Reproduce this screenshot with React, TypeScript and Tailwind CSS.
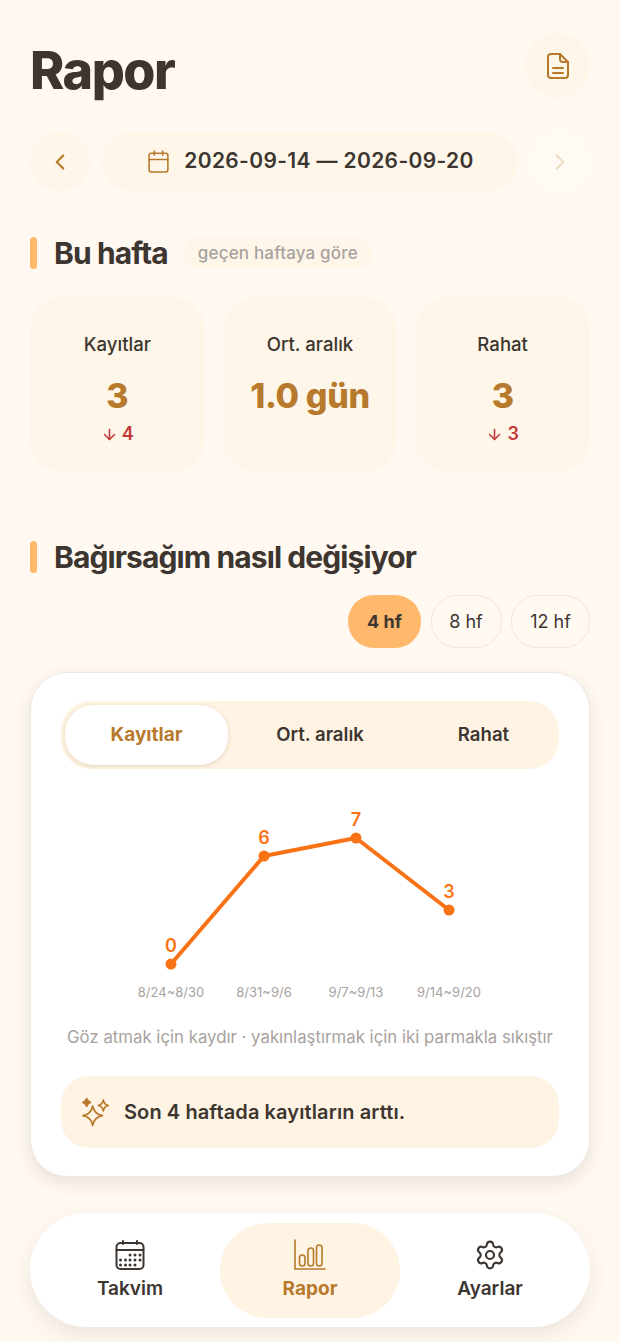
import { ArrowDown, Calendar, ChevronLeft, ChevronRight, Settings } from 'lucide-react';

const stats = [
  { label: 'Kayıtlar', value: '3', delta: '4' },
  { label: 'Ort. aralık', value: '1.0 gün' },
  { label: 'Rahat', value: '3', delta: '3' },
];

const points = [
  { x: 171, y: 964, value: '0', label: '8/24~8/30' },
  { x: 264, y: 856, value: '6', label: '8/31~9/6' },
  { x: 356, y: 838, value: '7', label: '9/7~9/13' },
  { x: 449, y: 910, value: '3', label: '9/14~9/20' },
];

function SectionTitle({ children }: { children: React.ReactNode }) {
  return (
    <div className="flex items-center gap-[17px]">
      <span className="h-[32px] w-[7px] rounded-full bg-[#ffb86c]" />
      <h2 className="text-[30px] font-bold leading-[34px] tracking-[-0.03em] text-[#3d3630]">{children}</h2>
    </div>
  );
}

function TrendChart() {
  // viewBox is in page coordinates, the chart starts at x=61
  return (
    <svg viewBox="61 790 498 215" className="block h-[215px] w-[498px]">
      <polyline
        points={points.map((p) => `${p.x},${p.y}`).join(' ')}
        fill="none"
        stroke="#f97316"
        strokeWidth="4"
        strokeLinejoin="round"
      />
      {points.map((p) => (
        <g key={p.label} textAnchor="middle">
          <circle cx={p.x} cy={p.y} r="5.5" fill="#f97316" />
          <text x={p.x} y={p.y - 12} fill="#f97316" fontSize="18" fontWeight="600">
            {p.value}
          </text>
          <text x={p.x} y="997" fill="#a8a29e" fontSize="13">
            {p.label}
          </text>
        </g>
      ))}
    </svg>
  );
}

function DocIcon() {
  return (
    <svg viewBox="0 0 24 28" className="h-[28px] w-[24px]" fill="none" stroke="#b7792b" strokeWidth="2" strokeLinecap="round" strokeLinejoin="round">
      <path d="M5 2h9l8 8v13a3 3 0 0 1-3 3H5a3 3 0 0 1-3-3V5a3 3 0 0 1 3-3Z" />
      <path d="M14 2v5a3 3 0 0 0 3 3h5M7 16h10M7 21h10" />
    </svg>
  );
}

function SparkleIcon() {
  return (
    <svg viewBox="0 0 30 30" className="h-[30px] w-[30px] shrink-0" fill="none" stroke="#b7792b" strokeWidth="1.7" strokeLinejoin="round">
      <path d="M12.7 9c1 5.6 3.6 8.6 9.8 9.7-6.2 1.1-8.8 4-9.8 9.7-1-5.7-3.6-8.6-9.7-9.7 6.1-1.1 8.7-4.1 9.7-9.7Z" />
      <path d="M23.3 3.2c.5 2.9 1.9 4.6 5 5.3-3.1.7-4.5 2.4-5 5.3-.5-2.9-1.9-4.6-5-5.3 3.1-.7 4.5-2.4 5-5.3Z" />
      <path d="M6.7 1.5c.4 2.1 1.3 3.3 3.8 3.9-2.5.6-3.4 1.8-3.8 3.9-.4-2.1-1.3-3.3-3.7-3.9 2.4-.6 3.3-1.8 3.7-3.9Z" fill="#b7792b" />
    </svg>
  );
}

function CalendarGridIcon() {
  return (
    <svg viewBox="0 0 32 32" className="h-8 w-8" fill="none" stroke="#3d3630" strokeWidth="2" strokeLinecap="round">
      <rect x="2.5" y="4" width="27" height="26" rx="4" />
      <path d="M2.5 11h27M9 2v3M23 2v3" />
      <g fill="#3d3630" stroke="none">
        <circle cx="16" cy="16" r="1.5" />
        <circle cx="21" cy="16" r="1.5" />
        <circle cx="26" cy="16" r="1.5" />
        <circle cx="6.5" cy="21" r="1.5" />
        <circle cx="11.5" cy="21" r="1.5" />
        <circle cx="16" cy="21" r="1.5" />
        <circle cx="21" cy="21" r="1.5" />
        <circle cx="26" cy="21" r="1.5" />
        <circle cx="6.5" cy="26" r="1.5" />
        <circle cx="11.5" cy="26" r="1.5" />
        <circle cx="16" cy="26" r="1.5" />
        <circle cx="21" cy="26" r="1.5" />
      </g>
    </svg>
  );
}

function BarsIcon() {
  return (
    <svg viewBox="0 0 32 32" className="h-8 w-8" fill="none" stroke="#b7792b" strokeWidth="1.6" strokeLinecap="round">
      <path d="M1 1v29h30" />
      <rect x="5.5" y="16" width="5.5" height="11" rx="2.7" />
      <rect x="14" y="9" width="5.5" height="18" rx="2.7" />
      <rect x="22.5" y="6" width="5.5" height="21" rx="2.7" />
    </svg>
  );
}

export default function App() {
  return (
    <div
      className="h-[1342px] overflow-hidden bg-[#fff9f2] px-[30px] text-[#3d3630]"
      style={{ fontFamily: 'Inter, "Noto Sans", sans-serif' }}
    >
      <header className="flex items-start justify-between pt-[33px]">
        <h1 className="pt-[10px] text-[52px] font-extrabold leading-[55px] tracking-[-0.03em]">Rapor</h1>
        <button className="flex h-[65px] w-[65px] items-center justify-center rounded-full bg-[#fff6ea]">
          <DocIcon />
        </button>
      </header>

      <div className="mt-[34px] flex h-[59px] items-stretch gap-3">
        <button className="flex w-[60px] items-center justify-center rounded-full bg-[#fff6ea]">
          <ChevronLeft className="h-[26px] w-[26px] text-[#b7792b]" strokeWidth={2} />
        </button>
        <div className="flex flex-1 items-center justify-center gap-[13px] rounded-full bg-[#fff6ea]">
          <Calendar className="h-[25px] w-[25px] text-[#b7792b]" strokeWidth={1.5} />
          <span className="pb-[2px] text-[21px] font-semibold tracking-[0.35px]">2026-09-14 — 2026-09-20</span>
        </div>
        <button className="flex w-[60px] items-center justify-center rounded-full bg-[#fffaf4]">
          <ChevronRight className="h-[26px] w-[26px] text-[#eedcc4]" strokeWidth={2} />
        </button>
      </div>

      <div className="mt-[45px] flex items-center gap-[15px]">
        <SectionTitle>Bu hafta</SectionTitle>
        <span className="rounded-full bg-[#fff6ea] px-[15px] py-[4px] text-[17px] font-medium leading-[22px] tracking-[0.01em] text-[#a8a29e]">
          geçen haftaya göre
        </span>
      </div>

      <div className="mt-[27px] grid grid-cols-3 gap-[18px]">
        {stats.map((s) => (
          <div key={s.label} className="flex h-[175px] flex-col items-center rounded-[32px] bg-[#fff6ea] pt-[35px]">
            <span className="text-[18.6px] font-medium leading-[24px]">{s.label}</span>
            <span className="mt-[19px] text-[34px] font-extrabold leading-[42px] tracking-[-0.01em] text-[#b7792b]">{s.value}</span>
            {s.delta && (
              <span className="mt-[6px] flex items-center gap-[4px] text-[18px] font-semibold leading-[22px] text-[#c53a3a]">
                <ArrowDown className="h-[17px] w-[17px]" strokeWidth={2.25} />
                {s.delta}
              </span>
            )}
          </div>
        ))}
      </div>

      <div className="mt-[68px]">
        <SectionTitle>Bağırsağım nasıl değişiyor</SectionTitle>
      </div>

      <div className="mt-[21px] flex justify-end gap-[9.5px] text-[18px] leading-[24px]">
        <button className="h-[53px] w-[73px] rounded-[26px] bg-[#ffb86c] font-bold">4 hf</button>
        <button className="h-[53px] w-[71px] rounded-[26px] border border-[#ece8e2]">8 hf</button>
        <button className="h-[53px] w-[79px] rounded-[26px] border border-[#ece8e2]">12 hf</button>
      </div>

      <section className="mt-[24px] h-[505px] rounded-[37px] border border-[#ece8e2] bg-white px-[30px] pt-[28px] shadow-[0_6px_16px_rgba(80,60,40,0.12)]">
        <div className="flex h-[68px] items-center rounded-[30px] bg-[#fff3e4] px-[4px] text-[18.6px] font-semibold">
          <div className="flex h-[60px] w-[163px] items-center justify-center rounded-[28px] bg-white text-[19px] font-bold text-[#b7792b] shadow-[0_1px_4px_rgba(120,80,30,0.2)]">
            Kayıtlar
          </div>
          <div className="flex w-[184px] justify-center">Ort. aralık</div>
          <div className="flex w-[143px] justify-center">Rahat</div>
        </div>
        <div className="mt-[21px]">
          <TrendChart />
        </div>
        <p className="mt-[20px] text-center text-[16.8px] leading-[24px] whitespace-nowrap text-[#a8a29e]">
          Göz atmak için kaydır · yakınlaştırmak için iki parmakla sıkıştır
        </p>
        <div className="mt-[27px] flex h-[72px] items-center gap-[14px] rounded-[28px] bg-[#fff3e4] pl-[19px]">
          <SparkleIcon />
          <span className="text-[20px] font-semibold tracking-[0.1px]">Son 4 haftada kayıtların arttı.</span>
        </div>
      </section>

      <nav className="mt-[36px] flex h-[114px] items-center justify-between rounded-[57px] bg-white px-[10px] shadow-[0_8px_20px_rgba(80,60,40,0.1)]">
        <div className="flex w-[180px] flex-col items-center gap-[5px]">
          <CalendarGridIcon />
          <span className="text-[19px] font-semibold leading-[26px]">Takvim</span>
        </div>
        <div className="flex h-[95px] w-[180px] flex-col items-center justify-center gap-[5px] rounded-[48px] bg-[#fff3e4]">
          <BarsIcon />
          <span className="text-[19px] font-bold leading-[26px] text-[#b7792b]">Rapor</span>
        </div>
        <div className="flex w-[180px] flex-col items-center gap-[5px]">
          <Settings className="h-8 w-8" strokeWidth={1.6} />
          <span className="text-[19px] font-semibold leading-[26px]">Ayarlar</span>
        </div>
      </nav>
    </div>
  );
}
